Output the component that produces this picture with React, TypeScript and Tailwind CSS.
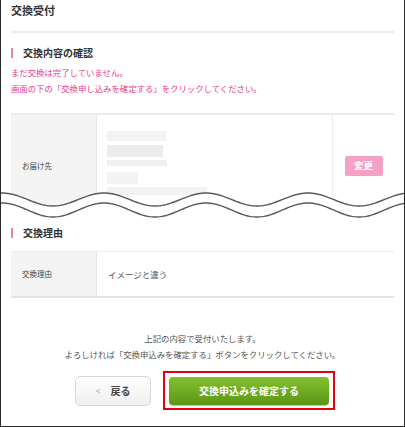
import React from "react";

const FONT = { fontFamily: '"Noto Sans CJK JP", "Noto Sans", sans-serif' };

function wavePath(center: number, amp: number, period: number, width: number) {
  const pts: string[] = [];
  for (let x = 0; x <= width; x += 2) {
    const y = center - amp * Math.cos(((x - 2) / period) * Math.PI * 2);
    pts.push(`${x},${y.toFixed(2)}`);
  }
  return pts;
}

function Wave() {
  const top = wavePath(11.5, 6.5, 102, 406);
  const bottom = wavePath(22, 7, 102, 406);
  const fill = `M${top.join(" L")} L406,40 L0,40 Z`;
  return (
    <svg className="absolute top-[75px] left-[-11px] w-[405px] h-[40px]" viewBox="0 0 405 40">
      <path d={fill} fill="#ffffff" />
      <path d={`M${top.join(" L")}`} fill="none" stroke="#5a5a5a" strokeWidth={1.4} />
      <path d={`M${bottom.join(" L")}`} fill="none" stroke="#5a5a5a" strokeWidth={1.4} />
    </svg>
  );
}

function SectionHeading({ label }: { label: string }) {
  return (
    <div className="flex items-center h-[12px]">
      <div className="w-[2px] h-[10px] bg-[#ee7fb3]" />
      <span className="ml-[10px] text-[10px] leading-[12px] font-bold text-[#333]">{label}</span>
    </div>
  );
}

export default function App() {
  return (
    <div className="w-[405px] h-[427px] bg-white border-x border-b border-[#2a2a2a] px-[10px] overflow-hidden" style={FONT}>
      {/* タイトル */}
      <div className="h-[33px] pt-[3px] border-b-2 border-[#ececec]">
        <h1 className="text-[11px] leading-[15px] font-bold text-[#333]">交換受付</h1>
      </div>

      <div className="mt-[14px]">
        <SectionHeading label="交換内容の確認" />
      </div>

      <div className="mt-[5px] text-[8.4px] leading-[16px] text-[#e6408e]">
        <p>まだ交換は完了していません。</p>
        <p>画面の下の「交換申し込みを確定する」をクリックしてください。</p>
      </div>

      {/* お届け先 */}
      <div className="relative mt-[17px]">
        <div className="flex h-[104px] border-t-2 border-[#ececec]">
          <div className="w-[86px] bg-[#f4f4f4] border-r border-[#e6e6e6] flex items-center pl-[11px]">
            <span className="text-[7.5px] text-[#444]">お届け先</span>
          </div>
          <div className="flex-1 border-r border-[#eeeeee] pl-[10px] pt-[16px] blur-[0.6px]">
            <div className="w-[59px] h-[10px] bg-[#f3f3f3]" />
            <div className="mt-[4px] w-[56px] h-[12px] bg-[#ececec]" />
            <div className="mt-[3px] w-[60px] h-[6px] bg-[#f0f0f0]" />
            <div className="mt-[6px] w-[31px] h-[12px] bg-[#f4f4f4]" />
            <div className="mt-[3px] w-[100px] h-[8px] bg-[#f2f2f2]" />
          </div>
          <div className="w-[61px] flex items-center justify-center">
            <button className="w-[38px] h-[20px] rounded-[2px] bg-[#f4a0c7] text-white text-[9.5px] font-bold leading-none">
              変更
            </button>
          </div>
        </div>
        <Wave />
      </div>

      <div className="mt-[10px]">
        <SectionHeading label="交換理由" />
      </div>

      {/* 交換理由 */}
      <div className="mt-[12px] flex h-[47px] border-t border-b-2 border-t-[#ececec] border-b-[#e4e4e4]">
        <div className="w-[86px] bg-[#f4f4f4] border-r border-[#e6e6e6] flex items-center pl-[11px]">
          <span className="text-[7.5px] text-[#444]">交換理由</span>
        </div>
        <div className="flex-1 flex items-center pl-[11px]">
          <span className="text-[8.5px] text-[#555]">イメージと違う</span>
        </div>
      </div>

      <div className="mt-[32px] text-center text-[8.4px] leading-[16px] text-[#555]">
        <p>上記の内容で受付いたします。</p>
        <p>よろしければ「交換申込みを確定する」ボタンをクリックしてください。</p>
      </div>

      <div className="mt-[9px] flex items-center pl-[64px]">
        <button className="w-[76px] h-[30px] rounded-[5px] border border-[#d8d8d8] bg-gradient-to-b from-white to-[#efefef] flex items-center justify-center gap-[10px] text-[10px] font-bold text-[#444]">
          <span className="text-[9px] font-normal text-[#aaa]">&lt;</span>
          <span>戻る</span>
        </button>
        <div className="ml-[12px] w-[172px] h-[39px] border-2 border-[#e60012] flex items-center justify-center">
          <button className="w-[160px] h-[28px] rounded-[4px] bg-gradient-to-b from-[#84c12e] to-[#5a9616] text-white text-[10px] font-bold shadow-[0_1px_1px_rgba(0,0,0,0.25)]">
            交換申込みを確定する
          </button>
        </div>
      </div>
    </div>
  );
}
